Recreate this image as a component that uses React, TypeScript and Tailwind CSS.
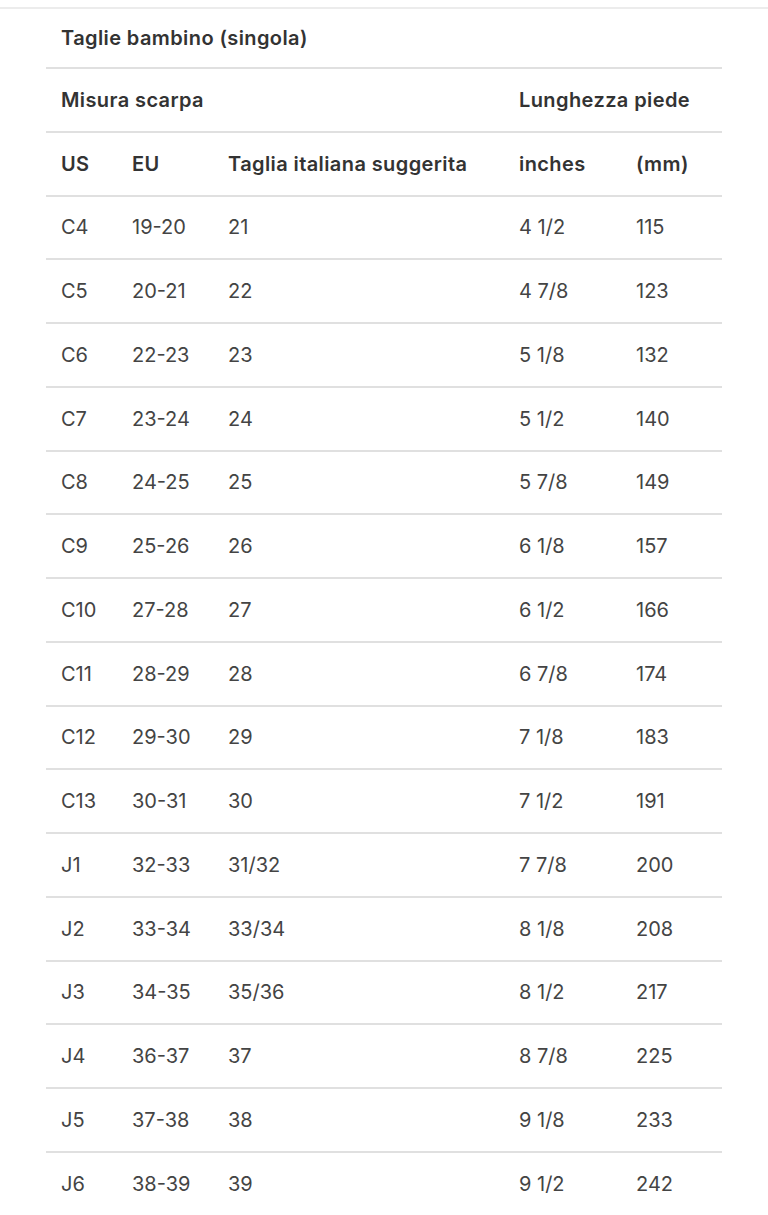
const rows: [string, string, string, string, string][] = [
  ['C4', '19-20', '21', '4 1/2', '115'],
  ['C5', '20-21', '22', '4 7/8', '123'],
  ['C6', '22-23', '23', '5 1/8', '132'],
  ['C7', '23-24', '24', '5 1/2', '140'],
  ['C8', '24-25', '25', '5 7/8', '149'],
  ['C9', '25-26', '26', '6 1/8', '157'],
  ['C10', '27-28', '27', '6 1/2', '166'],
  ['C11', '28-29', '28', '6 7/8', '174'],
  ['C12', '29-30', '29', '7 1/8', '183'],
  ['C13', '30-31', '30', '7 1/2', '191'],
  ['J1', '32-33', '31/32', '7 7/8', '200'],
  ['J2', '33-34', '33/34', '8 1/8', '208'],
  ['J3', '34-35', '35/36', '8 1/2', '217'],
  ['J4', '36-37', '37', '8 7/8', '225'],
  ['J5', '37-38', '38', '9 1/8', '233'],
  ['J6', '38-39', '39', '9 1/2', '242'],
];

const grid = 'grid grid-cols-[71px_96px_291px_117px_101px] items-center h-[63.75px] border-t-2 border-[#e0e0e0]';

export default function App() {
  return (
    <div className="min-h-screen bg-white pt-[7px] text-[20px] leading-[24px] text-[#444] font-['Inter',sans-serif]">
      <div className="border-t-2 border-[#ececec]">
        <div className="mx-[46px] w-[676px]">
          {/* Title */}
          <div className="flex h-[58px] items-center px-[15px] font-semibold tracking-[0.4px] text-[#333]">
            Taglie bambino (singola)
          </div>

          {/* Group headings */}
          <div className={`${grid} font-semibold tracking-[0.4px] text-[#333]`}>
            <div className="col-span-3 px-[15px]">Misura scarpa</div>
            <div className="col-span-2 px-[15px]">Lunghezza piede</div>
          </div>

          {/* Column headings */}
          <div className={`${grid} font-semibold tracking-[0.4px] text-[#333]`}>
            <div className="px-[15px]">US</div>
            <div className="px-[15px]">EU</div>
            <div className="px-[15px]">Taglia italiana suggerita</div>
            <div className="px-[15px]">inches</div>
            <div className="px-[15px]">(mm)</div>
          </div>

          {rows.map((r) => (
            <div key={r[0]} className={grid}>
              {r.map((cell, i) => (
                <div key={i} className="px-[15px]">
                  {cell}
                </div>
              ))}
            </div>
          ))}
        </div>
      </div>
    </div>
  );
}
